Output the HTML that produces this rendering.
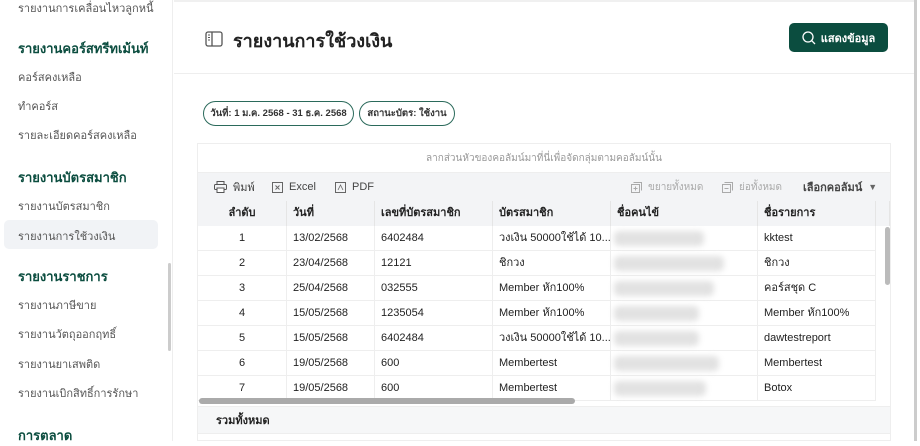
<!DOCTYPE html>
<html><head><meta charset="utf-8"><style>
*{box-sizing:border-box;margin:0;padding:0}
body{width:920px;height:441px;overflow:hidden;background:#fff;font-family:"Liberation Sans","Noto Sans CJK SC",sans-serif;color:#222;position:relative}
.abs{position:absolute}
.sb{left:0;top:0;width:173px;height:441px;border-right:1px solid #eee;background:#fff}
.sb .i{position:absolute;left:18px;font-size:11px;color:#555}
.sb .h{position:absolute;left:18px;font-size:13px;font-weight:bold;color:#0b4d3f}
.hdr{left:174px;top:0;width:741px;height:74px;border-bottom:1px solid #eee;border-top:2px solid #f0f0f0}
.btn{left:789px;top:23px;width:99px;height:29px;background:#0b4d3f;border-radius:5px;color:#fff;font-size:11px;font-weight:bold;display:flex;align-items:center;justify-content:center;gap:5px}
.pill{top:101px;height:25px;border:1.5px solid #2b6a5b;border-radius:13px;font-size:9.5px;font-weight:bold;display:flex;align-items:center;justify-content:center;color:#333}
.tbl{left:197px;top:143px;width:694px;height:298px;border:1px solid #eee}
.grp{position:absolute;left:0;top:0;width:692px;height:29px;text-align:center;font-size:10px;color:#999;line-height:29px;border-bottom:1px solid #eee}
.tool{position:absolute;left:0;top:29px;width:692px;height:28px;background:#f3f4f6;font-size:11px;color:#444}
.tool span{position:absolute;top:0;height:28px;display:flex;align-items:center;gap:6px}
.th{position:absolute;top:57px;height:25px;background:#f3f4f6;font-size:11px;font-weight:bold;border-right:1px solid #e5e5e5;line-height:25px;padding-left:6px}
.td{position:absolute;height:25px;font-size:11px;line-height:25px;border-right:1px solid #eee;border-bottom:1px solid #eee;padding-left:6px;white-space:nowrap;overflow:hidden}
.blur{position:absolute;background:#e2e2e2;filter:blur(3px);border-radius:5px}
</style></head><body>
<div class="abs sb">
<div class="i" style="top:-1px">รายงานการเคลื่อนไหวลูกหนี้</div>
<div class="h" style="top:38px">รายงานคอร์สทรีทเม้นท์</div>
<div class="i" style="top:68px">คอร์สคงเหลือ</div>
<div class="i" style="top:97px">ทำคอร์ส</div>
<div class="i" style="top:126px">รายละเอียดคอร์สคงเหลือ</div>
<div class="h" style="top:167px">รายงานบัตรสมาชิก</div>
<div class="i" style="top:197px">รายงานบัตรสมาชิก</div>
<div style="position:absolute;left:4px;top:220px;width:154px;height:29px;background:#f1f3f6;border-radius:5px"></div>
<div class="i" style="top:227px">รายงานการใช้วงเงิน</div>
<div style="position:absolute;left:168px;top:263px;width:3px;height:88px;background:#ccc;border-radius:2px"></div>
<div class="h" style="top:266px">รายงานราชการ</div>
<div class="i" style="top:296px">รายงานภาษีขาย</div>
<div class="i" style="top:325px">รายงานวัตถุออกฤทธิ์</div>
<div class="i" style="top:355px">รายงานยาเสพติด</div>
<div class="i" style="top:384px">รายงานเบิกสิทธิ์การรักษา</div>
<div class="h" style="top:425px">การตลาด</div>
</div>
<div class="abs hdr">
<svg class="abs" style="left:31px;top:29px" width="18" height="16" viewBox="0 0 18 16"><rect x="1" y="1" width="16" height="14" rx="2" fill="none" stroke="#555" stroke-width="1.3"/><line x1="7" y1="1" x2="7" y2="15" stroke="#555" stroke-width="1.3"/><line x1="3" y1="4" x2="5" y2="4" stroke="#555"/><line x1="3" y1="6.5" x2="5" y2="6.5" stroke="#555"/><line x1="3" y1="9" x2="5" y2="9" stroke="#555"/></svg>
<div class="abs" style="left:59px;top:24px;font-size:18px;font-weight:bold;color:#222">รายงานการใช้วงเงิน</div>
</div>
<div class="abs" style="left:914px;top:0;width:3px;height:441px;background:#ccc"></div>
<div class="abs btn"><svg width="14" height="14" viewBox="0 0 14 14"><circle cx="6" cy="6" r="5" fill="none" stroke="#fff" stroke-width="1.3"/><line x1="9.6" y1="9.6" x2="13" y2="13" stroke="#fff" stroke-width="1.3"/></svg>แสดงข้อมูล</div>
<div class="abs pill" style="left:203px;width:151px">วันที่: 1 ม.ค. 2568 - 31 ธ.ค. 2568</div>
<div class="abs pill" style="left:359px;width:96px">สถานะบัตร: ใช้งาน</div>
<div class="abs tbl">
<div class="grp">ลากส่วนหัวของคอลัมน์มาที่นี่เพื่อจัดกลุ่มตามคอลัมน์นั้น</div>
<div class="tool">
<span style="left:16px"><svg width="13" height="12" viewBox="0 0 13 12"><rect x="3" y="0.5" width="7" height="3" fill="none" stroke="#555"/><rect x="0.5" y="3.5" width="12" height="5" rx="1" fill="none" stroke="#555"/><rect x="3" y="7" width="7" height="4.5" fill="#fff" stroke="#555"/></svg>พิมพ์</span>
<span style="left:74px"><svg width="11" height="11" viewBox="0 0 11 11"><rect x="0.5" y="0.5" width="10" height="10" fill="none" stroke="#666"/><path d="M3.5 3.5L7.5 7.5M7.5 3.5L3.5 7.5" stroke="#666"/></svg>Excel</span>
<span style="left:137px"><svg width="11" height="11" viewBox="0 0 11 11"><rect x="0.5" y="0.5" width="10" height="10" fill="none" stroke="#666"/><path d="M3 8L5.5 3L8 8" fill="none" stroke="#666" stroke-width=".8"/></svg>PDF</span>
<span style="left:433px;color:#aaa;font-size:10px"><svg width="11" height="11" viewBox="0 0 11 11"><rect x="0.5" y="2.5" width="8" height="8" fill="none" stroke="#aaa"/><path d="M2.5 .5H10.5V8.5M4.5 4.5V8.5M2.5 6.5H6.5" fill="none" stroke="#aaa"/></svg>ขยายทั้งหมด</span>
<span style="left:524px;color:#aaa;font-size:10px"><svg width="11" height="11" viewBox="0 0 11 11"><rect x="0.5" y="2.5" width="8" height="8" fill="none" stroke="#aaa"/><path d="M2.5 .5H10.5V8.5M2.5 6.5H6.5" fill="none" stroke="#aaa"/></svg>ย่อทั้งหมด</span>
<span style="left:605px;font-weight:bold">เลือกคอลัมน์ <span style="position:static;height:auto;color:#666;font-size:9px">▼</span></span>
</div>
<div class="th" style="left:0;width:89px;text-align:center;padding:0">ลำดับ</div>
<div class="th" style="left:89px;width:88px">วันที่</div>
<div class="th" style="left:177px;width:118px">เลขที่บัตรสมาชิก</div>
<div class="th" style="left:295px;width:118px">บัตรสมาชิก</div>
<div class="th" style="left:413px;width:147px">ชื่อคนไข้</div>
<div class="th" style="left:560px;width:118px">ชื่อรายการ</div>
<div class="th" style="left:678px;width:14px;padding:0"></div>
<div id="rows"></div>
<div class="abs" style="left:687px;top:83px;width:5px;height:58px;background:#bbb;border-radius:3px"></div>
<div class="abs" style="left:1px;top:254px;width:376px;height:6px;background:#aaa;border-radius:3px"></div>
<div class="abs" style="left:0;top:262px;width:692px;height:28px;background:#f6f7f8;border-top:1px solid #eee;border-bottom:1px solid #eee;font-size:11px;font-weight:bold;line-height:28px;padding-left:18px">รวมทั้งหมด</div>
</div>
<script>
var d=[["1","13/02/2568","6402484","วงเงิน 50000ใช้ได้ 10...","kktest"],["2","23/04/2568","12121","ชิกวง","ชิกวง"],["3","25/04/2568","032555","Member หัก100%","คอร์สชุด C"],["4","15/05/2568","1235054","Member หัก100%","Member หัก100%"],["5","15/05/2568","6402484","วงเงิน 50000ใช้ได้ 10...","dawtestreport"],["6","19/05/2568","600","Membertest","Membertest"],["7","19/05/2568","600","Membertest","Botox"]];
var w=[90,110,100,85,85,105,92];
var h="";d.forEach(function(r,i){var t=82+i*25;
h+='<div class="td" style="left:0;top:'+t+'px;width:89px;text-align:center;padding:0">'+r[0]+'</div>';
h+='<div class="td" style="left:89px;top:'+t+'px;width:88px">'+r[1]+'</div>';
h+='<div class="td" style="left:177px;top:'+t+'px;width:118px">'+r[2]+'</div>';
h+='<div class="td" style="left:295px;top:'+t+'px;width:118px">'+r[3]+'</div>';
h+='<div class="td" style="left:413px;top:'+t+'px;width:147px"></div><div class="blur" style="left:416px;top:'+(t+5)+'px;width:'+w[i]+'px;height:15px"></div>';
h+='<div class="td" style="left:560px;top:'+t+'px;width:118px">'+r[4]+'</div>';});
document.getElementById("rows").innerHTML=h;
</script>
</body></html>
